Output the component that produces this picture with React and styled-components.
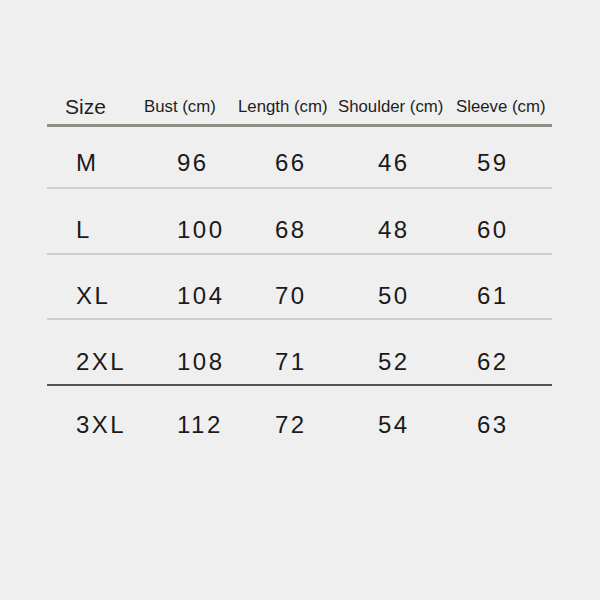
import React from 'react';
import styled, { createGlobalStyle } from 'styled-components';

const GlobalStyle = createGlobalStyle`
  html, body {
    margin: 0;
    padding: 0;
    background: #efefef;
  }
  body {
    font-family: "Liberation Sans", Arial, sans-serif;
    color: #1c1c1c;
  }
`;

const Page = styled.div`
  width: 600px;
  height: 600px;
  background: #efefef;
  padding-top: 86px;
  box-sizing: border-box;
`;

const Table = styled.div`
  margin-left: 47px;
  width: 505px;
`;

const COLS = '93px 95px 100px 115px 102px';

const HeadRow = styled.div`
  display: grid;
  grid-template-columns: ${COLS};
  height: 41px;
  align-items: center;
  padding-top: 3px;
  box-sizing: border-box;
  border-bottom: 3px solid #8f8f87;
`;

const HeadCell = styled.div`
  padding-left: ${p => p.$indent}px;
  font-size: ${p => (p.$big ? '21px' : '16.8px')};
  white-space: nowrap;
  color: #1e1e1e;
`;

const Row = styled.div`
  display: grid;
  grid-template-columns: ${COLS};
  height: ${p => p.$h}px;
  padding-top: ${p => p.$pad}px;
  box-sizing: border-box;
  border-bottom: ${p => p.$line};
`;

const Cell = styled.div`
  padding-left: ${p => p.$indent}px;
  font-size: 24px;
  line-height: 28px;
  letter-spacing: 2.5px;
  color: #1a1a1a;
`;

const heads = [
  { label: 'Size', indent: 18, big: true },
  { label: 'Bust (cm)', indent: 4 },
  { label: 'Length (cm)', indent: 3 },
  { label: 'Shoulder (cm)', indent: 3 },
  { label: 'Sleeve (cm)', indent: 6 },
];

const cellIndents = [29, 37, 40, 43, 27];

const LIGHT = '2px solid #cdcdcd';
const DARK = '2px solid #56564e';

const rows = [
  { values: ['M', '96', '66', '46', '59'], h: 62, pad: 22, line: LIGHT },
  { values: ['L', '100', '68', '48', '60'], h: 66, pad: 27, line: LIGHT },
  { values: ['XL', '104', '70', '50', '61'], h: 65, pad: 27, line: LIGHT },
  { values: ['2XL', '108', '71', '52', '62'], h: 66, pad: 28, line: DARK },
  { values: ['3XL', '112', '72', '54', '63'], h: 66, pad: 25, line: 'none' },
];

export default function App() {
  return (
    <Page>
      <GlobalStyle />
      <Table>
        <HeadRow>
          {heads.map(h => (
            <HeadCell key={h.label} $indent={h.indent} $big={h.big}>
              {h.label}
            </HeadCell>
          ))}
        </HeadRow>
        {rows.map(r => (
          <Row key={r.values[0]} $h={r.h} $pad={r.pad} $line={r.line}>
            {r.values.map((v, i) => (
              <Cell key={i} $indent={cellIndents[i]}>{v}</Cell>
            ))}
          </Row>
        ))}
      </Table>
    </Page>
  );
}
